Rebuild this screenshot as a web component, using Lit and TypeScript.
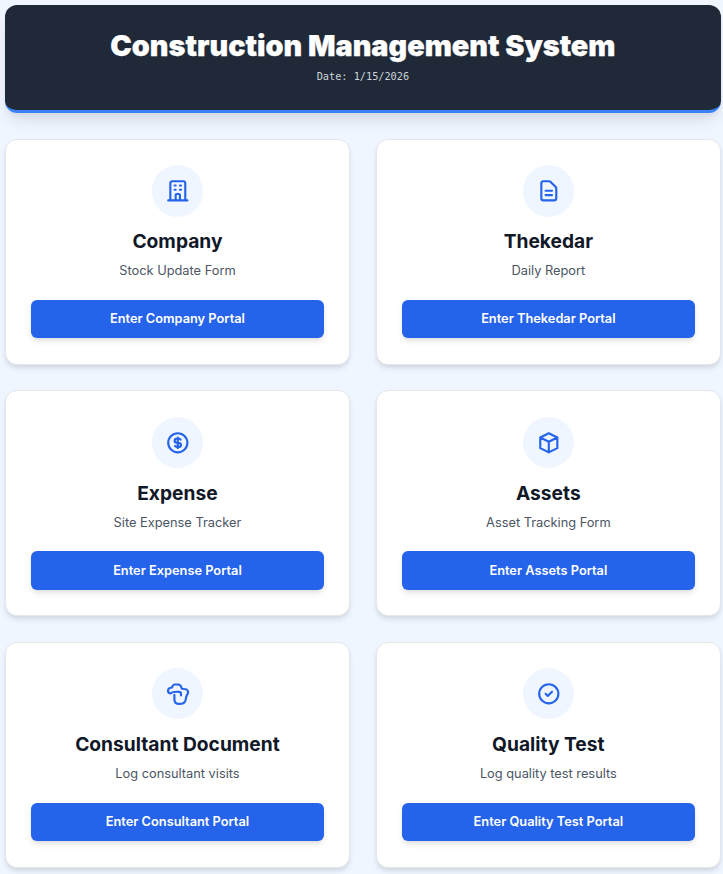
import { LitElement, html, css, svg } from "lit";
import { customElement } from "lit/decorators.js";

const icons: Record<string, any> = {
  building: svg`<path d="M19 21V5a2 2 0 00-2-2H7a2 2 0 00-2 2v16m14 0h2m-2 0h-5m-9 0H3m2 0h5M9 7h1m-1 4h1m4-4h1m-1 4h1m-5 10v-5a1 1 0 011-1h2a1 1 0 011 1v5m-4 0h4"/>`,
  doc: svg`<path d="M9 12h6m-6 4h6m2 5H7a2 2 0 01-2-2V5a2 2 0 012-2h5.586a1 1 0 01.707.293l5.414 5.414a1 1 0 01.293.707V19a2 2 0 01-2 2z"/>`,
  dollar: svg`<path d="M12 8c-1.657 0-3 .895-3 2s1.343 2 3 2 3 .895 3 2-1.343 2-3 2m0-8c1.11 0 2.08.402 2.599 1M12 8V7m0 1v8m0 0v1m0-1c-1.11 0-2.08-.402-2.599-1M21 12a9 9 0 11-18 0 9 9 0 0118 0z"/>`,
  cube: svg`<path d="M20 7l-8-4-8 4m16 0l-8 4m8-4v10l-8 4m0-10L4 7m8 4v10M4 7v10l8 4"/>`,
  hand: svg`<path d="M8.800 13V17c0 2.800 2 4.500 4.700 4.500 3 0 5.200-1.200 5.800-3.500.4-2 .4-3.500 1.400-5 1.200-1.800 1.100-3.800-.2-4.800-1-.7-3-.8-4.700-.9C15.300 5.100 14.100 3.300 12 3.300H9c-1.200 0-1.900 1.400-2.500 2.800-1.700.2-3.300.7-3.600 2.400-.3 1.600.6 2.800 2.100 3.100 1.500-1 5.500-1.600 8-1.400 1.400.1 2 .9 2 1.800v1.500"/>`,
  check: svg`<path d="M9 12l2 2 4-4m6 2a9 9 0 11-18 0 9 9 0 0118 0z"/>`,
};

const cards = [
  { icon: "building", title: "Company", sub: "Stock Update Form", btn: "Enter Company Portal" },
  { icon: "doc", title: "Thekedar", sub: "Daily Report", btn: "Enter Thekedar Portal" },
  { icon: "dollar", title: "Expense", sub: "Site Expense Tracker", btn: "Enter Expense Portal" },
  { icon: "cube", title: "Assets", sub: "Asset Tracking Form", btn: "Enter Assets Portal" },
  { icon: "hand", title: "Consultant Document", sub: "Log consultant visits", btn: "Enter Consultant Portal" },
  { icon: "check", title: "Quality Test", sub: "Log quality test results", btn: "Enter Quality Test Portal" },
];

@customElement("app-root")
export class AppRoot extends LitElement {
  static styles = css`
    :host {
      display: block;
      height: 874px;
      overflow: hidden;
      box-sizing: border-box;
      padding: 5px 2px 0 4.8px;
      background: #eff6ff;
      font-family: Inter, "Noto Sans", sans-serif;
    }
    .header {
      box-sizing: border-box;
      height: 108px;
      background: #1f2937;
      border-bottom: 3px solid #3b82f6;
      border-radius: 12px;
      box-shadow: 0 10px 15px -3px rgba(0, 0, 0, 0.1), 0 4px 6px -2px rgba(0, 0, 0, 0.05);
      color: #fff;
      text-align: center;
      padding-top: 23px;
      margin-bottom: 25.8px;
    }
    h1 {
      margin: 0;
      font-size: 28.8px;
      line-height: 35px;
      font-weight: 900;
      -webkit-text-stroke: 0.25px #fff;
    }
    .date {
      margin-top: 5px;
      font-family: "DejaVu Sans Mono", "Liberation Mono", monospace;
      font-size: 10.24px;
      line-height: 16px;
      color: #d1d5db;
    }
    .grid {
      display: grid;
      grid-template-columns: 1fr 1fr;
      column-gap: 25.6px;
      row-gap: 25.6px;
    }
    .card {
      box-sizing: border-box;
      background: #fff;
      border: 1px solid #e5e7eb;
      border-radius: 12px;
      box-shadow: 0 4px 6px -1px rgba(0, 0, 0, 0.1), 0 2px 4px -1px rgba(0, 0, 0, 0.06);
      padding: 25.6px 25.4px 25.4px;
      display: flex;
      flex-direction: column;
      align-items: center;
    }
    .circle {
      width: 51.2px;
      height: 51.2px;
      border-radius: 50%;
      background: #eff6ff;
      display: flex;
      align-items: center;
      justify-content: center;
      margin-bottom: 13.7px;
    }
    .circle svg {
      width: 25.6px;
      height: 25.6px;
      fill: none;
      stroke: #2563eb;
      stroke-width: 2;
      stroke-linecap: round;
      stroke-linejoin: round;
    }
    h2 {
      margin: 0;
      font-size: 19.2px;
      line-height: 23.04px;
      font-weight: 700;
      color: #111827;
    }
    p {
      margin: 8px 0 0;
      font-size: 12.8px;
      line-height: 19.2px;
      color: #4b5563;
    }
    .btn {
      margin-top: 19.36px;
      align-self: stretch;
      height: 38.4px;
      padding: 0 0 1px;
      border: 0;
      border-radius: 6px;
      background: #2563eb;
      color: #fff;
      font-family: inherit;
      font-size: 12.8px;
      font-weight: 600;
      box-shadow: 0 4px 6px -1px rgba(0, 0, 0, 0.1), 0 2px 4px -1px rgba(0, 0, 0, 0.06);
    }
  `;

  render() {
    return html`
      <header class="header">
        <h1>Construction Management System</h1>
        <div class="date">Date: 1/15/2026</div>
      </header>
      <main class="grid">
        ${cards.map(
          (c) => html`
            <section class="card">
              <div class="circle"><svg viewBox="0 0 24 24">${icons[c.icon]}</svg></div>
              <h2>${c.title}</h2>
              <p>${c.sub}</p>
              <button class="btn">${c.btn}</button>
            </section>
          `
        )}
      </main>
    `;
  }
}
